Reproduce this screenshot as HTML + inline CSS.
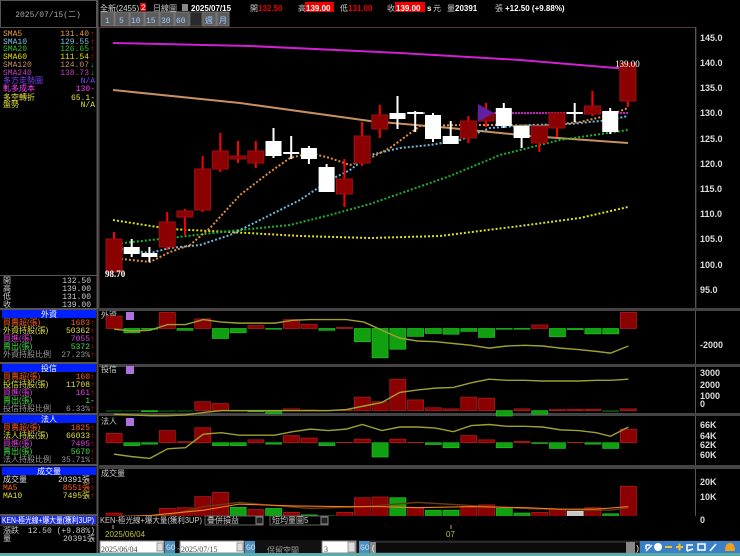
<!DOCTYPE html>
<html><head><meta charset="utf-8"><style>
html,body{margin:0;padding:0;background:#000;width:740px;height:556px;overflow:hidden}
svg{display:block}
text{font-family:"Liberation Mono","Noto Sans CJK TC",monospace;font-size:8px}
.c{font-family:"Liberation Sans","Noto Sans CJK TC",sans-serif}
.ax{font-family:"Liberation Sans","DejaVu Sans",sans-serif;font-size:9px;font-weight:bold;fill:#ddd}
.r{text-anchor:end}
</style></head><body>
<svg width="740" height="556" viewBox="0 0 740 556" xmlns="http://www.w3.org/2000/svg">
<rect width="740" height="556" fill="#000"/>
<rect x="0.5" y="0.5" width="96" height="27" fill="#000" stroke="#555"/>
<text x="48" y="17" fill="#aaa" text-anchor="middle">2025/07/15(二)</text>
<line x1="97.5" y1="0" x2="97.5" y2="556" stroke="#555" stroke-width="2"/>
<g>
<text x="3" y="36" fill="#e8a040">SMA5</text><text x="89" y="36" class="r" fill="#e8a040">131.40</text><text x="90" y="36" fill="#f00">↑</text>
<text x="3" y="44" fill="#7ac0e0">SMA10</text><text x="89" y="44" class="r" fill="#7ac0e0">129.55</text><text x="90" y="44" fill="#f00">↑</text>
<text x="3" y="51" fill="#30c030">SMA20</text><text x="89" y="51" class="r" fill="#30c030">126.65</text><text x="90" y="51" fill="#f00">↑</text>
<text x="3" y="59" fill="#e0e000">SMA60</text><text x="89" y="59" class="r" fill="#e0e000">111.54</text><text x="90" y="59" fill="#f00">↑</text>
<text x="3" y="67" fill="#c09060">SMA120</text><text x="89" y="67" class="r" fill="#c09060">124.07</text><text x="90" y="67" fill="#0c0">↓</text>
<text x="3" y="75" fill="#c040c0">SMA240</text><text x="89" y="75" class="r" fill="#c040c0">138.73</text><text x="90" y="75" fill="#0c0">↓</text>
<text x="3" y="83" fill="#8040ff" class="c">多方走勢圖</text><text x="95" y="83" class="r" fill="#8040ff">N/A</text>
<text x="3" y="91" fill="#ff40ff" class="c">軋多成本</text><text x="95" y="91" class="r" fill="#ff40ff">130-</text>
<text x="3" y="100" fill="#e0e040" class="c">多空轉折</text><text x="95" y="100" class="r" fill="#e0e040">65.1-</text>
<text x="3" y="107" fill="#e0e040" class="c">盤勢</text><text x="95" y="107" class="r" fill="#e0e040">N/A</text>
</g>
<line x1="0" y1="275.5" x2="97" y2="275.5" stroke="#555"/>
<text x="3" y="283" fill="#ccc" class="c">開</text><text x="91" y="283" class="r" fill="#ccc">132.50</text>
<text x="3" y="291" fill="#ccc" class="c">高</text><text x="91" y="291" class="r" fill="#ccc">139.00</text>
<text x="3" y="299" fill="#ccc" class="c">低</text><text x="91" y="299" class="r" fill="#ccc">131.00</text>
<text x="3" y="307" fill="#ccc" class="c">收</text><text x="91" y="307" class="r" fill="#ccc">139.00</text>
<line x1="0" y1="309" x2="97" y2="309" stroke="#555" stroke-width="2"/>
<rect x="2" y="310" width="94" height="8" fill="#0020ff"/><text x="49" y="317" fill="#fff" text-anchor="middle" class="c">外資</text>
<text x="3" y="325" fill="#ff6020" class="c">買賣超(張)</text><text x="90" y="325" class="r" fill="#ff6020">1683</text><text x="90" y="325" fill="#f00">↑</text>
<text x="3" y="333" fill="#e0e040" class="c">外資持股(張)</text><text x="90" y="333" class="r" fill="#e0e040">50362</text><text x="90" y="333" fill="#f00">↑</text>
<text x="3" y="341" fill="#e040e0" class="c">買進(張)</text><text x="90" y="341" class="r" fill="#e040e0">7055</text><text x="90" y="341" fill="#f00">↑</text>
<text x="3" y="349" fill="#40e040" class="c">賣出(張)</text><text x="90" y="349" class="r" fill="#40e040">5372</text><text x="90" y="349" fill="#f00">↑</text>
<text x="3" y="357" fill="#999" class="c">外資持股比例</text><text x="90" y="357" class="r" fill="#999">27.23%</text><text x="90" y="357" fill="#f00">↑</text>
<line x1="0" y1="363" x2="97" y2="363" stroke="#555" stroke-width="2"/>
<rect x="2" y="364" width="94" height="8" fill="#0020ff"/><text x="49" y="371" fill="#fff" text-anchor="middle" class="c">投信</text>
<text x="3" y="379" fill="#ff6020" class="c">買賣超(張)</text><text x="90" y="379" class="r" fill="#ff6020">160</text><text x="90" y="379" fill="#f00">↑</text>
<text x="3" y="387" fill="#e0e040" class="c">投信持股(張)</text><text x="90" y="387" class="r" fill="#e0e040">11708</text><text x="90" y="387" fill="#f00">↑</text>
<text x="3" y="395" fill="#e040e0" class="c">買進(張)</text><text x="90" y="395" class="r" fill="#e040e0">161</text><text x="90" y="395" fill="#f00">↑</text>
<text x="3" y="403" fill="#40e040" class="c">賣出(張)</text><text x="90" y="403" class="r" fill="#40e040">1</text><text x="90" y="403" fill="#ccc">-</text>
<text x="3" y="411" fill="#999" class="c">投信持股比例</text><text x="90" y="411" class="r" fill="#999">6.33%</text><text x="90" y="411" fill="#f00">↑</text>
<line x1="0" y1="414" x2="97" y2="414" stroke="#555" stroke-width="2"/>
<rect x="2" y="415" width="94" height="8" fill="#0020ff"/><text x="49" y="422" fill="#fff" text-anchor="middle" class="c">法人</text>
<text x="3" y="430" fill="#ff6020" class="c">買賣超(張)</text><text x="90" y="430" class="r" fill="#ff6020">1825</text><text x="90" y="430" fill="#f00">↑</text>
<text x="3" y="438" fill="#e0e040" class="c">法人持股(張)</text><text x="90" y="438" class="r" fill="#e0e040">66033</text><text x="90" y="438" fill="#f00">↑</text>
<text x="3" y="446" fill="#e040e0" class="c">買進(張)</text><text x="90" y="446" class="r" fill="#e040e0">7495</text><text x="90" y="446" fill="#f00">↑</text>
<text x="3" y="454" fill="#40e040" class="c">賣出(張)</text><text x="90" y="454" class="r" fill="#40e040">5670</text><text x="90" y="454" fill="#f00">↑</text>
<text x="3" y="462" fill="#999" class="c">法人持股比例</text><text x="90" y="462" class="r" fill="#999">35.71%</text><text x="90" y="462" fill="#f00">↑</text>
<line x1="0" y1="465" x2="97" y2="465" stroke="#555" stroke-width="2"/>
<rect x="2" y="467" width="94" height="8" fill="#0020ff"/><text x="49" y="474" fill="#fff" text-anchor="middle" class="c">成交量</text>
<text x="3" y="482" fill="#ddd" class="c">成交量</text><text x="90" y="482" class="r" fill="#ddd">20391張</text><text x="90" y="482" fill="#f00">↑</text>
<text x="3" y="490" fill="#ff6020">MA5</text><text x="90" y="490" class="r" fill="#ff6020">8551張</text><text x="90" y="490" fill="#f00">↑</text>
<text x="3" y="498" fill="#e0e040">MA10</text><text x="90" y="498" class="r" fill="#e0e040">7495張</text><text x="90" y="498" fill="#f00">↑</text>
<line x1="0" y1="515" x2="97" y2="515" stroke="#555" stroke-width="2"/>
<rect x="1" y="516" width="95" height="8" fill="#2030e0"/><text x="2" y="523" fill="#fff" class="c" font-size="7" textLength="92" lengthAdjust="spacingAndGlyphs">KEN-極光線+爆大量(獲利3UP)</text>
<line x1="0" y1="525" x2="97" y2="525" stroke="#555"/>
<text x="3" y="533" fill="#ccc" class="c">漲跌</text><text x="95" y="533" class="r" fill="#ccc">12.50 (+9.88%)</text>
<text x="3" y="541" fill="#ccc" class="c">量</text><text x="95" y="541" class="r" fill="#ccc">20391張</text>

<text x="100" y="11" fill="#ddd" class="c">全新(2455)</text>
<rect x="140" y="3" width="6" height="8" fill="#e00"/><text x="141" y="10" fill="#fff" font-size="7">2</text>
<text x="153" y="11" fill="#ccc" class="c">日線圖</text>
<rect x="182" y="4" width="6" height="7" fill="#888"/>
<text x="191" y="11" fill="#fff" font-weight="bold" font-size="10" style="font-family:'Liberation Sans'">2025/07/15</text>
<text x="250" y="11" fill="#ccc" class="c">開</text>
<text x="258" y="11" fill="#e00" font-weight="bold" font-size="10" style="font-family:'Liberation Sans'">132.50</text>
<text x="298" y="11" fill="#ccc" class="c">高</text>
<rect x="305" y="2" width="29" height="10" fill="#e00"/><text x="306" y="11" fill="#fff" font-weight="bold" font-size="10" style="font-family:'Liberation Sans'">139.00</text>
<text x="340" y="11" fill="#ccc" class="c">低</text>
<text x="348" y="11" fill="#e00" font-weight="bold" font-size="10" style="font-family:'Liberation Sans'">131.00</text>
<text x="387" y="11" fill="#ccc" class="c">收</text>
<rect x="395" y="2" width="30" height="10" fill="#e00"/><text x="396" y="11" fill="#fff" font-weight="bold" font-size="10" style="font-family:'Liberation Sans'">139.00</text>
<text x="427" y="11" fill="#fff" font-weight="bold" style="font-family:'Liberation Sans'">s</text>
<text x="433" y="11" fill="#ccc" class="c">元</text>
<text x="447" y="11" fill="#ccc" class="c">量</text>
<text x="455" y="11" fill="#fff" font-weight="bold" font-size="10" style="font-family:'Liberation Sans'">20391</text>
<text x="495" y="11" fill="#ccc" class="c">張</text>
<text x="505" y="11" fill="#fff" font-weight="bold" font-size="10" style="font-family:'Liberation Sans'">+12.50 (+9.88%)</text>
<g font-size="8">
<rect x="101" y="12" width="13" height="14" fill="#5c5c5c" stroke="#777"/><text x="105" y="23" fill="#9cf">1</text>
<rect x="115" y="12" width="14" height="14" fill="#5c5c5c" stroke="#777"/><text x="119" y="23" fill="#9cf">5</text>
<rect x="130" y="12" width="14" height="14" fill="#5c5c5c" stroke="#777"/><text x="131" y="23" fill="#9cf">10</text>
<rect x="145" y="12" width="14" height="14" fill="#5c5c5c" stroke="#777"/><text x="146" y="23" fill="#9cf">15</text>
<rect x="160" y="12" width="14" height="14" fill="#5c5c5c" stroke="#777"/><text x="161" y="23" fill="#9cf">30</text>
<rect x="175" y="12" width="14" height="14" fill="#5c5c5c" stroke="#777"/><text x="176" y="23" fill="#9cf">60</text>
<rect x="190" y="12" width="12" height="14" fill="#2a2a2a" stroke="#555"/>
<rect x="203" y="12" width="13" height="14" fill="#5c5c5c" stroke="#777"/><text x="205" y="23" fill="#9cf" class="c">週</text>
<rect x="217" y="12" width="12" height="14" fill="#5c5c5c" stroke="#777"/><text x="219" y="23" fill="#9cf" class="c">月</text>
</g>

<rect x="99" y="27.5" width="597" height="281" fill="none" stroke="#553838"/>
<line x1="695.5" y1="27" x2="695.5" y2="524" stroke="#555"/>
<rect x="99" y="308" width="641" height="3" fill="#444"/>
<rect x="99" y="364" width="641" height="3" fill="#444"/>
<rect x="99" y="413" width="641" height="3" fill="#444"/>
<rect x="99" y="465" width="641" height="4" fill="#444"/>
<line x1="99" y1="524" x2="696" y2="524" stroke="#666"/>
<g class="ax">
<text x="700" y="41" class="ax">145.0</text><text x="700" y="66" class="ax">140.0</text><text x="700" y="91" class="ax">135.0</text>
<text x="700" y="116" class="ax">130.0</text><text x="700" y="142" class="ax">125.0</text><text x="700" y="167" class="ax">120.0</text>
<text x="700" y="192" class="ax">115.0</text><text x="700" y="217" class="ax">110.0</text><text x="700" y="242" class="ax">105.0</text>
<text x="700" y="268" class="ax">100.0</text><text x="700" y="293" class="ax">95.0</text>
<text x="700" y="348" class="ax">-2000</text>
<text x="700" y="376" class="ax">3000</text><text x="700" y="388" class="ax">2000</text><text x="700" y="399" class="ax">1000</text><text x="700" y="407" class="ax">0</text>
<text x="700" y="428" class="ax">66K</text><text x="700" y="439" class="ax">64K</text><text x="700" y="448" class="ax">62K</text><text x="700" y="458" class="ax">60K</text>
<text x="700" y="485" class="ax">20K</text><text x="700" y="500" class="ax">10K</text><text x="700" y="523" class="ax">0</text>
</g>

<polyline fill="none" stroke="#d020d0" stroke-width="2" points="113,43 250,46 400,53 520,60 628,69"/>
<polyline fill="none" stroke="#c89060" stroke-width="2" points="113,90 240,103 370,121 450,128 530,136 628,143"/>
<polyline fill="none" stroke="#e0e020" stroke-width="2" stroke-dasharray="2 2" points="113,220 170,229 230,232 300,236 370,238 440,236 520,226 580,218 628,207"/>
<polyline fill="none" stroke="#20b030" stroke-width="2" stroke-dasharray="2 2" points="113,244 170,238 230,231 290,225 330,215 370,204 410,190 450,176 500,155 560,140 628,130"/>
<polyline fill="none" stroke="#70b8e0" stroke-width="2" stroke-dasharray="2 2" points="113,248 150,253 170,248 200,245 230,235 260,220 300,200 330,180 350,170 370,155 400,148 430,145 460,140 490,128 530,125 570,124 610,120 628,116"/>
<polyline fill="none" stroke="#e09040" stroke-width="2" stroke-dasharray="2 2" points="113,258 150,262 170,252 190,245 210,228 240,195 270,172 290,158 310,153 330,158 350,165 370,158 390,148 420,126 460,125 500,125 540,126 580,122 610,115 628,108"/>
<line x1="494" y1="113" x2="628" y2="113" stroke="#c020c0" stroke-width="2" stroke-dasharray="2 1"/>
<line x1="408" y1="113" x2="425" y2="113" stroke="#777" stroke-width="2"/>

<g stroke-width="2">
<line x1="114" y1="232" x2="114" y2="272" stroke="#f00"/>
<line x1="131.7" y1="239" x2="131.7" y2="257" stroke="#fff"/>
<line x1="149.4" y1="247" x2="149.4" y2="262" stroke="#fff"/>
<line x1="167.2" y1="212" x2="167.2" y2="250" stroke="#f00"/>
<line x1="184.9" y1="209" x2="184.9" y2="235" stroke="#f00"/>
<line x1="202.6" y1="156" x2="202.6" y2="212" stroke="#f00"/>
<line x1="220.3" y1="133" x2="220.3" y2="172" stroke="#f00"/>
<line x1="238" y1="141" x2="238" y2="163" stroke="#f00"/>
<line x1="255.8" y1="141" x2="255.8" y2="168" stroke="#f00"/>
<line x1="273.5" y1="128" x2="273.5" y2="158" stroke="#fff"/>
<line x1="291.2" y1="136" x2="291.2" y2="159" stroke="#fff"/>
<line x1="308.9" y1="146" x2="308.9" y2="164" stroke="#fff"/>
<line x1="326.6" y1="164" x2="326.6" y2="192" stroke="#fff"/>
<line x1="344.4" y1="159" x2="344.4" y2="207" stroke="#f00"/>
<line x1="362.1" y1="122" x2="362.1" y2="166" stroke="#f00"/>
<line x1="379.8" y1="105" x2="379.8" y2="138" stroke="#f00"/>
<line x1="397.5" y1="96" x2="397.5" y2="129" stroke="#fff"/>
<line x1="415.2" y1="111" x2="415.2" y2="132" stroke="#fff"/>
<line x1="433" y1="113" x2="433" y2="142" stroke="#fff"/>
<line x1="450.7" y1="121" x2="450.7" y2="144" stroke="#fff"/>
<line x1="468.4" y1="116" x2="468.4" y2="143" stroke="#f00"/>
<line x1="486.1" y1="103" x2="486.1" y2="127" stroke="#f00"/>
<line x1="503.8" y1="103" x2="503.8" y2="128" stroke="#fff"/>
<line x1="521.6" y1="126" x2="521.6" y2="148" stroke="#fff"/>
<line x1="539.3" y1="126" x2="539.3" y2="152" stroke="#f00"/>
<line x1="557" y1="113" x2="557" y2="137" stroke="#f00"/>
<line x1="574.7" y1="103" x2="574.7" y2="122" stroke="#fff"/>
<line x1="592.4" y1="91" x2="592.4" y2="116" stroke="#f00"/>
<line x1="610.2" y1="108" x2="610.2" y2="134" stroke="#fff"/>
<line x1="627.9" y1="63" x2="627.9" y2="107" stroke="#f00"/>
</g>
<g>
<g fill="#8b0000" stroke="#a01010" stroke-width="1">
<rect x="106" y="239" width="16" height="33"/>
<rect x="159.2" y="222" width="16" height="25"/>
<rect x="176.9" y="211" width="16" height="6"/>
<rect x="194.6" y="169" width="16" height="41"/>
<rect x="212.3" y="151" width="16" height="18"/>
<rect x="230" y="156" width="16" height="3"/>
<rect x="247.8" y="151" width="16" height="12"/>
<rect x="336.4" y="179" width="16" height="15"/>
<rect x="354.1" y="136" width="16" height="27"/>
<rect x="371.8" y="115" width="16" height="14"/>
<rect x="460.4" y="121" width="16" height="17"/>
<rect x="478.1" y="113" width="16" height="8"/>
<rect x="531.3" y="126" width="16" height="17"/>
<rect x="549" y="113" width="16" height="15"/>
<rect x="584.4" y="106" width="16" height="8"/>
<rect x="619.9" y="63" width="16" height="38"/>
</g>
<g fill="#fff">
<rect x="123.7" y="247" width="16" height="7"/>
<rect x="141.4" y="253" width="16" height="4"/>
<rect x="265.5" y="141" width="16" height="15"/>
<rect x="283.2" y="152" width="16" height="2"/>
<rect x="300.9" y="148" width="16" height="11"/>
<rect x="318.6" y="167" width="16" height="25"/>
<rect x="389.5" y="113" width="16" height="6"/>
<rect x="407.2" y="112" width="16" height="2"/>
<rect x="425" y="115" width="16" height="24"/>
<rect x="442.7" y="136" width="16" height="8"/>
<rect x="495.8" y="108" width="16" height="18"/>
<rect x="513.6" y="126" width="16" height="12"/>
<rect x="566.7" y="112" width="16" height="2"/>
<rect x="602.2" y="111" width="16" height="21"/>
</g>
</g>
<polygon points="478,104 478,122 494,113" fill="#6020a0"/>
<text x="615" y="67" fill="#fff" style="font-size:9px;font-family:'Liberation Serif'">139.00</text>
<text x="105" y="277" fill="#fff" style="font-size:9px;font-weight:bold;font-family:'Liberation Serif'">98.70</text>

<text x="101" y="318" fill="#ccc" class="c">外資</text>
<rect x="126" y="312" width="8" height="8" fill="#b070e0"/>
<g transform="translate(98,306) scale(0.35714)">
<g fill="#8b0000" stroke="#b02020" stroke-width="2">
<rect x="22.5" y="28" width="45" height="35"/><rect x="171.5" y="18" width="45" height="45"/><rect x="270.8" y="36" width="45" height="27"/><rect x="419.8" y="55" width="45" height="8"/><rect x="519.1" y="38" width="45" height="25"/><rect x="568.8" y="51" width="45" height="12"/><rect x="668.1" y="60" width="45" height="3"/><rect x="1214.3" y="53" width="45" height="10"/><rect x="1462.6" y="18" width="45" height="45"/>
</g>
<g fill="#10a010" stroke="#20c020" stroke-width="2">
<rect x="72.2" y="63" width="45" height="12"/><rect x="121.8" y="63" width="45" height="2"/><rect x="221.1" y="63" width="45" height="5"/><rect x="320.5" y="63" width="45" height="28"/><rect x="370.1" y="63" width="45" height="12"/><rect x="469.4" y="63" width="45" height="2"/><rect x="618.4" y="63" width="45" height="5"/><rect x="717.7" y="63" width="45" height="37"/><rect x="767.4" y="63" width="45" height="82"/><rect x="817" y="63" width="45" height="58"/><rect x="866.7" y="63" width="45" height="22"/><rect x="916.4" y="63" width="45" height="14"/><rect x="966" y="63" width="45" height="16"/><rect x="1015.7" y="63" width="45" height="8"/><rect x="1065.4" y="63" width="45" height="25"/><rect x="1115" y="63" width="45" height="2"/><rect x="1164.7" y="63" width="45" height="2"/><rect x="1264" y="63" width="45" height="23"/><rect x="1313.7" y="63" width="45" height="3"/><rect x="1363.3" y="63" width="45" height="15"/><rect x="1413" y="63" width="45" height="15"/>
</g>
<polyline fill="none" stroke="#a0a030" stroke-width="4" points="45,65 95,70 145,68 195,52 245,52 295,38 345,45 395,48 445,48 495,48 545,40 595,38 645,38 695,38 745,45 795,68 845,90 895,98 945,100 995,105 1045,110 1095,118 1145,112 1195,110 1245,112 1295,118 1345,122 1395,127 1435,132 1485,112"/>
<g fill="#8b0000" stroke="#b02020" stroke-width="2">
<rect x="270.8" y="268" width="45" height="25"/><rect x="320.5" y="273" width="45" height="20"/><rect x="519.1" y="288" width="45" height="5"/><rect x="568.8" y="291" width="45" height="2"/><rect x="668.1" y="291" width="45" height="2"/><rect x="717.7" y="255" width="45" height="38"/><rect x="767.4" y="268" width="45" height="25"/><rect x="817" y="205" width="45" height="88"/><rect x="866.7" y="263" width="45" height="30"/><rect x="916.4" y="285" width="45" height="8"/><rect x="966" y="288" width="45" height="5"/><rect x="1015.7" y="255" width="45" height="38"/><rect x="1065.4" y="258" width="45" height="35"/><rect x="1164.7" y="288" width="45" height="5"/><rect x="1264" y="290" width="45" height="3"/><rect x="1313.7" y="289" width="45" height="4"/><rect x="1363.3" y="289" width="45" height="4"/><rect x="1462.6" y="288" width="45" height="5"/>
</g>
<g fill="#10a010" stroke="#20c020" stroke-width="2">
<rect x="22.5" y="293" width="45" height="2" fill="#0a500a" stroke="#0a500a"/><rect x="72.2" y="293" width="45" height="1" fill="#0a500a" stroke="#0a500a"/><rect x="121.8" y="293" width="45" height="3"/><rect x="171.5" y="293" width="45" height="2" fill="#0a500a" stroke="#0a500a"/><rect x="221.1" y="293" width="45" height="2" fill="#0a500a" stroke="#0a500a"/><rect x="370.1" y="293" width="45" height="1"/><rect x="419.8" y="293" width="45" height="3"/><rect x="469.4" y="293" width="45" height="8"/><rect x="1115" y="293" width="45" height="15"/><rect x="1214.3" y="293" width="45" height="10"/><rect x="1413" y="293" width="45" height="3" fill="#0a500a" stroke="#0a500a"/>
</g>
<polyline fill="none" stroke="#a0a030" stroke-width="4" points="45,303 95,305 145,307 195,307 245,305 295,298 345,293 395,293 445,293 495,293 545,293 595,293 645,293 695,290 745,280 795,270 845,242 895,235 945,230 995,228 1045,215 1095,205 1145,208 1195,208 1245,210 1295,210 1345,210 1395,208 1435,208 1485,205"/>
</g>
<text x="101" y="372" fill="#ccc" class="c">投信</text>
<rect x="126" y="366" width="8" height="8" fill="#b070e0"/>

<text x="101" y="424" fill="#ccc" class="c">法人</text>
<rect x="126" y="418" width="8" height="8" fill="#b070e0"/>
<text x="101" y="476" fill="#ccc" class="c">成交量</text>
<g transform="translate(98,412) scale(0.35714)">
<g fill="#8b0000" stroke="#b02020" stroke-width="2">
<rect x="22.5" y="60" width="45" height="26"/><rect x="171.5" y="52" width="45" height="34"/><rect x="221.1" y="83" width="45" height="3"/><rect x="270.8" y="44" width="45" height="42"/><rect x="419.8" y="78" width="45" height="8"/><rect x="519.1" y="66" width="45" height="20"/><rect x="568.8" y="73" width="45" height="13"/><rect x="668.1" y="85" width="45" height="1"/><rect x="717.7" y="76" width="45" height="10"/><rect x="817" y="76" width="45" height="10"/><rect x="866.7" y="85" width="45" height="1"/><rect x="1015.7" y="66" width="45" height="20"/><rect x="1065.4" y="78" width="45" height="8"/><rect x="1164.7" y="82" width="45" height="4"/><rect x="1313.7" y="85" width="45" height="1"/><rect x="1462.6" y="48" width="45" height="38"/>
</g>
<g fill="#10a010" stroke="#20c020" stroke-width="2">
<rect x="72.2" y="86" width="45" height="8"/><rect x="121.8" y="86" width="45" height="4"/><rect x="320.5" y="86" width="45" height="8"/><rect x="370.1" y="86" width="45" height="8"/><rect x="469.4" y="86" width="45" height="4"/><rect x="618.4" y="86" width="45" height="8"/><rect x="767.4" y="86" width="45" height="40"/><rect x="916.4" y="86" width="45" height="5"/><rect x="966" y="86" width="45" height="14"/><rect x="1115" y="86" width="45" height="14"/><rect x="1214.3" y="86" width="45" height="2" fill="#0a500a"/><rect x="1264" y="86" width="45" height="16"/><rect x="1363.3" y="86" width="45" height="4"/><rect x="1413" y="86" width="45" height="16"/>
</g>
<polyline fill="none" stroke="#a0a030" stroke-width="4" points="45,118 95,125 145,130 195,103 245,100 295,62 345,58 395,65 445,65 495,65 545,55 595,48 645,52 695,48 740,35 795,52 845,42 895,42 945,45 995,55 1045,38 1095,35 1145,40 1195,40 1245,42 1295,50 1345,52 1395,58 1435,68 1485,42"/>
<g fill="#8b0000" stroke="#b02020" stroke-width="2">
<rect x="22.5" y="283" width="45" height="19"/><rect x="171.5" y="270" width="45" height="32"/><rect x="221.1" y="268" width="45" height="34"/><rect x="270.8" y="237" width="45" height="65"/><rect x="320.5" y="225" width="45" height="77"/><rect x="419.8" y="273" width="45" height="29"/><rect x="519.1" y="281" width="45" height="21"/><rect x="668.1" y="281" width="45" height="21"/><rect x="717.7" y="240" width="45" height="62"/><rect x="767.4" y="238" width="45" height="64"/><rect x="866.7" y="268" width="45" height="34"/><rect x="1015.7" y="265" width="45" height="37"/><rect x="1065.4" y="260" width="45" height="42"/><rect x="1214.3" y="281" width="45" height="21"/><rect x="1264" y="272" width="45" height="30"/><rect x="1363.3" y="268" width="45" height="34"/><rect x="1462.6" y="208" width="45" height="94"/>
</g>
<g fill="#10a010" stroke="#20c020" stroke-width="2">
<rect x="72.2" y="293" width="45" height="9"/><rect x="121.8" y="295" width="45" height="7"/><rect x="370.1" y="267" width="45" height="35"/><rect x="469.4" y="270" width="45" height="32"/><rect x="568.8" y="288" width="45" height="14"/><rect x="618.4" y="291" width="45" height="11"/><rect x="817" y="240" width="45" height="62"/><rect x="916.4" y="275" width="45" height="27"/><rect x="966" y="275" width="45" height="27"/><rect x="1115" y="270" width="45" height="32"/><rect x="1164.7" y="283" width="45" height="19"/><rect x="1413" y="285" width="45" height="17"/>
</g>
<rect x="1313.7" y="278" width="45" height="24" fill="#c8c8c8" stroke="#ddd" stroke-width="2"/>
<polyline fill="none" stroke="#6a3a10" stroke-width="4" points="45,293 195,290 295,265 395,253 495,262 595,270 745,265 895,253 1045,262 1195,270 1345,275 1435,275 1485,268"/>
<polyline fill="none" stroke="#ff8020" stroke-width="3" points="45,293 145,290 295,275 395,258 545,263 695,265 795,265 895,268 1045,265 1195,268 1295,272 1395,272 1485,265"/>
</g>

<rect x="99" y="516" width="597" height="9" fill="#000"/>
<text x="100" y="523" fill="#ccc" class="c" font-size="7" textLength="102" lengthAdjust="spacingAndGlyphs">KEN-極光線+爆大量(獲利3UP)</text>
<rect x="205" y="516" width="58" height="9" fill="#000" stroke="#666"/><text x="207" y="523" fill="#ccc" class="c" font-size="7">疊併損益</text>
<rect x="256" y="517" width="7" height="7" fill="#222" stroke="#888"/>
<rect x="270" y="516" width="58" height="9" fill="#000" stroke="#666"/><text x="272" y="523" fill="#ccc" class="c" font-size="7">短均量圖5</text>
<rect x="321" y="517" width="7" height="7" fill="#222" stroke="#888"/>
<line x1="113" y1="525" x2="113" y2="529" stroke="#aa9"/>
<text x="105" y="537" fill="#c0c040" font-size="9" style="font-family:'Liberation Sans'">2025/06/04</text>
<line x1="451" y1="525" x2="451" y2="529" stroke="#aa9"/>
<text x="446" y="537" fill="#c0c040" font-size="9" style="font-family:'Liberation Sans'">07</text>
<rect x="99" y="540" width="641" height="14" fill="#111"/>
<rect x="100" y="541" width="64" height="12" fill="#fff" stroke="#888"/><text x="101" y="552" fill="#444" font-size="11" style="font-family:'Liberation Serif'">2025/06/04</text>
<rect x="157" y="543" width="6" height="8" fill="#ddd" stroke="#999"/>
<rect x="165" y="541" width="10" height="12" fill="#4a90c0"/><text x="166" y="550" fill="#cde" font-size="6">GO</text>
<text x="177" y="552" fill="#ccc" font-size="11">~</text>
<rect x="180" y="541" width="64" height="12" fill="#fff" stroke="#888"/><text x="181" y="552" fill="#444" font-size="11" style="font-family:'Liberation Serif'">2025/07/15</text>
<rect x="237" y="543" width="6" height="8" fill="#ddd" stroke="#999"/>
<rect x="245" y="541" width="10" height="12" fill="#4a90c0"/><text x="246" y="550" fill="#cde" font-size="6">GO</text>
<text x="267" y="553" fill="#999" class="c" font-size="13">保留空間</text>
<rect x="322" y="541" width="34" height="12" fill="#fff" stroke="#888"/><text x="324" y="552" fill="#444" font-size="11" style="font-family:'Liberation Serif'">3</text>
<rect x="348" y="542" width="7" height="10" fill="#ddd" stroke="#999"/>
<rect x="359" y="541" width="11" height="12" fill="#4a90c0"/><text x="360" y="550" fill="#cde" font-size="6">GO</text>
<rect x="370" y="542" width="270" height="11" fill="#0a0a0a" stroke="#444"/>
<rect x="370" y="542" width="6" height="11" fill="#888"/><text x="371" y="551" fill="#fff" font-size="8">(</text>
<rect x="626" y="542" width="9" height="11" fill="#888"/><text x="635" y="551" fill="#fff" font-size="8">)</text>
<rect x="640" y="541" width="100" height="12" fill="#3a80c8"/>
<g stroke="#fff" stroke-width="1.5" fill="none">
<path d="M646 551 L652 545 M646 545 L646 549 M646 545 L650 545"/>
<circle cx="658" cy="547" r="4" fill="#fff" stroke="none"/>
<path d="M665 547 H672" stroke="#f0c030" stroke-width="2"/>
<path d="M676 547 H683 M679.5 543.5 V550.5" stroke="#f0c030" stroke-width="2"/>
<path d="M687 551 L687 545 L693 545 M687 551 L693 549"/>
<rect x="698" y="544" width="7" height="6"/>
<path d="M710 551 L716 544"/>
</g>
<path d="M725 551 Q725 543 730 543 Q735 543 735 551 Z" fill="#f0a020"/>
<rect x="0" y="553" width="740" height="3" fill="#5aaaa8"/>
</svg>
</body></html>
